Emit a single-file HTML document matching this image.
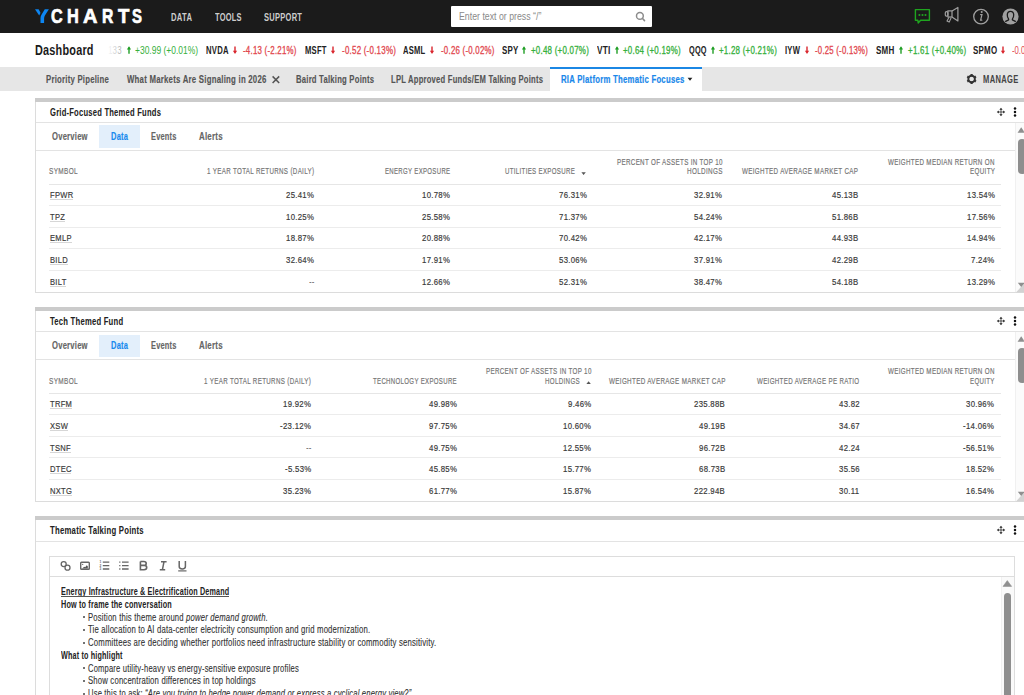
<!DOCTYPE html><html><head><meta charset="utf-8"><style>
html,body{margin:0;padding:0;width:1024px;height:695px;overflow:hidden;background:#fff;}
body{position:relative;font-family:"Liberation Sans",sans-serif;}
.t{position:absolute;white-space:nowrap;transform-origin:0 0;}
.r{position:absolute;}
</style></head><body>
<div class="r" style="left:0.00px;top:0.00px;width:1024.00px;height:33.20px;background:#1b1b1b;"></div>
<svg class="r" style="left:0;top:0" width="160" height="33" viewBox="0 0 160 33">
<path d="M35.0 9.2 H38.6 L40.3 12.2 Q40.5 13.0 40.1 13.8 L39.2 15.4 Z" fill="#0d86f2"/>
<path d="M44.8 9.2 H48.9 L44.9 15.6 Q44.1 16.9 44.1 18.6 V22.9 H40.5 V18.2 Q40.5 16.2 41.6 14.4 Z" fill="#0d86f2"/>
</svg>
<div class="t" style="top:7px;left:51.05px;font-size:19.77px;line-height:19.77px;color:#ffffff;font-weight:bold;transform:scaleX(0.8184);-webkit-text-stroke:0.7px #fff;">C</div>
<div class="t" style="top:7px;left:67.40px;font-size:19.77px;line-height:19.77px;color:#ffffff;font-weight:bold;transform:scaleX(0.8290);-webkit-text-stroke:0.7px #fff;">H</div>
<div class="t" style="top:7px;left:83.40px;font-size:19.77px;line-height:19.77px;color:#ffffff;font-weight:bold;transform:scaleX(1.0116);-webkit-text-stroke:0.7px #fff;">A</div>
<div class="t" style="top:7px;left:102.20px;font-size:19.77px;line-height:19.77px;color:#ffffff;font-weight:bold;transform:scaleX(0.7939);-webkit-text-stroke:0.7px #fff;">R</div>
<div class="t" style="top:7px;left:117.55px;font-size:19.77px;line-height:19.77px;color:#ffffff;font-weight:bold;transform:scaleX(0.9412);-webkit-text-stroke:0.7px #fff;">T</div>
<div class="t" style="top:7px;left:132.30px;font-size:19.77px;line-height:19.77px;color:#ffffff;font-weight:bold;transform:scaleX(0.7530);-webkit-text-stroke:0.7px #fff;">S</div>
<div class="t" style="top:12px;left:171.00px;font-size:10.90px;line-height:10.90px;color:#cdcdcd;font-weight:bold;letter-spacing:0.40px;transform:scaleX(0.7031);">DATA</div>
<div class="t" style="top:12px;left:214.70px;font-size:10.90px;line-height:10.90px;color:#cdcdcd;font-weight:bold;letter-spacing:0.40px;transform:scaleX(0.6832);">TOOLS</div>
<div class="t" style="top:12px;left:264.00px;font-size:10.90px;line-height:10.90px;color:#cdcdcd;font-weight:bold;letter-spacing:0.40px;transform:scaleX(0.6896);">SUPPORT</div>
<div class="r" style="left:451.10px;top:6.10px;width:201.00px;height:20.80px;background:#ffffff;border-radius:1px;"></div>
<div class="t" style="top:12px;left:459.10px;font-size:10.47px;line-height:10.47px;color:#8a8a8a;transform:scaleX(0.8372);">Enter text or press &ldquo;/&rdquo;</div>
<svg class="r" style="left:634px;top:10px" width="14" height="14" viewBox="0 0 14 14">
<circle cx="5.9" cy="5.9" r="3.4" stroke="#8c8c8c" stroke-width="1.5" fill="none"/><path d="M8.3 8.3 L10.5 10.6" stroke="#8c8c8c" stroke-width="1.6" stroke-linecap="round"/></svg>
<svg class="r" style="left:900px;top:0" width="124" height="33" viewBox="900 0 124 33">
<path d="M915.4 9.6 H929.4 V20.2 H920.6 L918.2 23.0 L917.8 20.2 H915.4 Z" stroke="#1fa51f" stroke-width="1.4" fill="none" stroke-linejoin="round"/>
<circle cx="919.4" cy="15.0" r="1.05" fill="#1fa51f"/><circle cx="922.5" cy="15.0" r="1.05" fill="#1fa51f"/><circle cx="925.5" cy="15.0" r="1.05" fill="#1fa51f"/>
<rect x="945.3" y="11.7" width="2.6" height="4.5" rx="1.2" stroke="#a0a0a0" stroke-width="1.2" fill="none"/>
<rect x="947.9" y="10.9" width="4.1" height="6.1" stroke="#a0a0a0" stroke-width="1.2" fill="none"/>
<path d="M952 10.9 L957.9 7.5 V21.0 L952 17.0" stroke="#a0a0a0" stroke-width="1.2" fill="none" stroke-linejoin="round"/>
<path d="M949.0 17.3 L947.0 20.9 L949.2 22.1 L951.2 17.6" stroke="#a0a0a0" stroke-width="1.1" fill="none" stroke-linejoin="round"/>
<circle cx="981.0" cy="16.6" r="7.3" stroke="#a0a0a0" stroke-width="1.3" fill="none"/>
<path d="M981.6 12.0 h0.2" stroke="#a0a0a0" stroke-width="1.8" stroke-linecap="round"/>
<path d="M980.6 14.6 h1.4 l-1.4 5.6 h1.2" stroke="#a0a0a0" stroke-width="1.2" fill="none" stroke-linecap="round"/>
<circle cx="1010.5" cy="16.5" r="8.1" fill="#a0a0a0"/>
<path d="M1005.2 21.6 L1008.6 19.9 Q1008.8 19.2 1008.4 18.6 Q1007.2 17.0 1007.3 14.6 Q1007.5 11.3 1010.5 11.3 Q1013.5 11.3 1013.7 14.6 Q1013.8 17.0 1012.6 18.6 Q1012.2 19.2 1012.4 19.9 L1015.8 21.6" stroke="#1b1b1b" stroke-width="1.3" fill="none" stroke-linejoin="round"/>
</svg>
<div class="t" style="top:43px;left:35.00px;font-size:14.97px;line-height:14.97px;color:#1a1a1a;font-weight:bold;letter-spacing:0.30px;transform:scaleX(0.7256);">Dashboard</div>
<div class="t" style="top:46px;left:108.20px;font-size:10.17px;line-height:10.17px;color:#777;letter-spacing:0.30px;transform:scaleX(0.7734);">133</div>
<div class="r" style="left:104.00px;top:40.00px;width:21.00px;height:18.00px;background:linear-gradient(to right,rgba(255,255,255,1) 15%,rgba(255,255,255,0.3) 100%);"></div>
<svg class="r" style="left:124.75px;top:44px" width="8" height="12" viewBox="0 0 8 12"><path d="M4 3.6 V9.8" stroke="#1f9e25" stroke-width="1.4"/><path d="M1.9 5.4 L4 2.3 L6.1 5.4 Z" fill="#1f9e25"/></svg>
<div class="t" style="top:46px;left:135.20px;font-size:10.17px;line-height:10.17px;color:#36b03c;transform:scaleX(0.8341);">+30.99 (+0.01%)</div>
<div class="t" style="top:46px;left:205.90px;font-size:10.17px;line-height:10.17px;color:#222222;font-weight:bold;letter-spacing:0.30px;transform:scaleX(0.7568);">NVDA</div>
<svg class="r" style="left:230.75px;top:44px" width="8" height="12" viewBox="0 0 8 12"><path d="M4 2.4 V8.6" stroke="#d9262e" stroke-width="1.4"/><path d="M1.9 6.8 L4 9.9 L6.1 6.8 Z" fill="#d9262e"/></svg>
<div class="t" style="top:46px;left:243.40px;font-size:10.17px;line-height:10.17px;color:#e2474e;letter-spacing:0.30px;transform:scaleX(0.7766);-webkit-text-stroke:0.3px currentColor;">-4.13 (-2.21%)</div>
<div class="t" style="top:46px;left:304.60px;font-size:10.17px;line-height:10.17px;color:#222222;font-weight:bold;letter-spacing:0.30px;transform:scaleX(0.7527);">MSFT</div>
<svg class="r" style="left:328.65px;top:44px" width="8" height="12" viewBox="0 0 8 12"><path d="M4 2.4 V8.6" stroke="#d9262e" stroke-width="1.4"/><path d="M1.9 6.8 L4 9.9 L6.1 6.8 Z" fill="#d9262e"/></svg>
<div class="t" style="top:46px;left:342.00px;font-size:10.17px;line-height:10.17px;color:#e2474e;letter-spacing:0.30px;transform:scaleX(0.7824);-webkit-text-stroke:0.3px currentColor;">-0.52 (-0.13%)</div>
<div class="t" style="top:46px;left:403.30px;font-size:10.17px;line-height:10.17px;color:#222222;font-weight:bold;letter-spacing:0.30px;transform:scaleX(0.7467);">ASML</div>
<svg class="r" style="left:428.05px;top:44px" width="8" height="12" viewBox="0 0 8 12"><path d="M4 2.4 V8.6" stroke="#d9262e" stroke-width="1.4"/><path d="M1.9 6.8 L4 9.9 L6.1 6.8 Z" fill="#d9262e"/></svg>
<div class="t" style="top:46px;left:441.30px;font-size:10.17px;line-height:10.17px;color:#e2474e;letter-spacing:0.30px;transform:scaleX(0.7752);-webkit-text-stroke:0.3px currentColor;">-0.26 (-0.02%)</div>
<div class="t" style="top:46px;left:501.60px;font-size:10.17px;line-height:10.17px;color:#222222;font-weight:bold;letter-spacing:0.30px;transform:scaleX(0.7784);">SPY</div>
<svg class="r" style="left:520.05px;top:44px" width="8" height="12" viewBox="0 0 8 12"><path d="M4 3.6 V9.8" stroke="#1f9e25" stroke-width="1.4"/><path d="M1.9 5.4 L4 2.3 L6.1 5.4 Z" fill="#1f9e25"/></svg>
<div class="t" style="top:46px;left:531.30px;font-size:10.17px;line-height:10.17px;color:#36b03c;letter-spacing:0.30px;transform:scaleX(0.7822);-webkit-text-stroke:0.3px currentColor;">+0.48 (+0.07%)</div>
<div class="t" style="top:46px;left:596.60px;font-size:10.17px;line-height:10.17px;color:#222222;font-weight:bold;letter-spacing:0.30px;transform:scaleX(0.8164);">VTI</div>
<svg class="r" style="left:612.65px;top:44px" width="8" height="12" viewBox="0 0 8 12"><path d="M4 3.6 V9.8" stroke="#1f9e25" stroke-width="1.4"/><path d="M1.9 5.4 L4 2.3 L6.1 5.4 Z" fill="#1f9e25"/></svg>
<div class="t" style="top:46px;left:623.00px;font-size:10.17px;line-height:10.17px;color:#36b03c;letter-spacing:0.30px;transform:scaleX(0.7795);-webkit-text-stroke:0.3px currentColor;">+0.64 (+0.19%)</div>
<div class="t" style="top:46px;left:688.70px;font-size:10.17px;line-height:10.17px;color:#222222;font-weight:bold;letter-spacing:0.30px;transform:scaleX(0.7229);">QQQ</div>
<svg class="r" style="left:708.85px;top:44px" width="8" height="12" viewBox="0 0 8 12"><path d="M4 3.6 V9.8" stroke="#1f9e25" stroke-width="1.4"/><path d="M1.9 5.4 L4 2.3 L6.1 5.4 Z" fill="#1f9e25"/></svg>
<div class="t" style="top:46px;left:719.30px;font-size:10.17px;line-height:10.17px;color:#36b03c;letter-spacing:0.30px;transform:scaleX(0.7822);-webkit-text-stroke:0.3px currentColor;">+1.28 (+0.21%)</div>
<div class="t" style="top:46px;left:784.80px;font-size:10.17px;line-height:10.17px;color:#222222;font-weight:bold;letter-spacing:0.30px;transform:scaleX(0.7517);">IYW</div>
<svg class="r" style="left:802.55px;top:44px" width="8" height="12" viewBox="0 0 8 12"><path d="M4 2.4 V8.6" stroke="#d9262e" stroke-width="1.4"/><path d="M1.9 6.8 L4 9.9 L6.1 6.8 Z" fill="#d9262e"/></svg>
<div class="t" style="top:46px;left:814.90px;font-size:10.17px;line-height:10.17px;color:#e2474e;letter-spacing:0.30px;transform:scaleX(0.7665);-webkit-text-stroke:0.3px currentColor;">-0.25 (-0.13%)</div>
<div class="t" style="top:46px;left:875.90px;font-size:10.17px;line-height:10.17px;color:#222222;font-weight:bold;letter-spacing:0.30px;transform:scaleX(0.7896);">SMH</div>
<svg class="r" style="left:896.95px;top:44px" width="8" height="12" viewBox="0 0 8 12"><path d="M4 3.6 V9.8" stroke="#1f9e25" stroke-width="1.4"/><path d="M1.9 5.4 L4 2.3 L6.1 5.4 Z" fill="#1f9e25"/></svg>
<div class="t" style="top:46px;left:907.70px;font-size:10.17px;line-height:10.17px;color:#36b03c;letter-spacing:0.30px;transform:scaleX(0.7863);-webkit-text-stroke:0.3px currentColor;">+1.61 (+0.40%)</div>
<div class="t" style="top:46px;left:972.90px;font-size:10.17px;line-height:10.17px;color:#222222;font-weight:bold;letter-spacing:0.30px;transform:scaleX(0.7812);">SPMO</div>
<svg class="r" style="left:999.40px;top:44px" width="8" height="12" viewBox="0 0 8 12"><path d="M4 2.4 V8.6" stroke="#d9262e" stroke-width="1.4"/><path d="M1.9 6.8 L4 9.9 L6.1 6.8 Z" fill="#d9262e"/></svg>
<div class="t" style="top:46px;left:1011.70px;font-size:10.17px;line-height:10.17px;color:#e2474e;transform:scaleX(0.7600);">-0.02 (-0.01%)</div>
<div class="r" style="left:0.00px;top:66.80px;width:1024.00px;height:23.90px;background:#e6e6e6;"></div>
<div class="t" style="top:73px;left:46.20px;font-size:11.63px;line-height:11.63px;color:#555555;font-weight:bold;letter-spacing:0.35px;transform:scaleX(0.6669);-webkit-text-stroke:0.15px currentColor;">Priority Pipeline</div>
<div class="t" style="top:73px;left:126.60px;font-size:11.63px;line-height:11.63px;color:#555555;font-weight:bold;letter-spacing:0.35px;transform:scaleX(0.6716);-webkit-text-stroke:0.15px currentColor;">What Markets Are Signaling in 2026</div>
<svg class="r" style="left:270px;top:73px" width="12" height="12" viewBox="270 73 12 12"><path d="M272.6 76.4 L279.2 83.0 M279.2 76.4 L272.6 83.0" stroke="#555" stroke-width="1.5"/></svg>
<div class="t" style="top:73px;left:296.00px;font-size:11.63px;line-height:11.63px;color:#555555;font-weight:bold;letter-spacing:0.35px;transform:scaleX(0.6597);-webkit-text-stroke:0.15px currentColor;">Baird Talking Points</div>
<div class="t" style="top:73px;left:391.00px;font-size:11.63px;line-height:11.63px;color:#555555;font-weight:bold;letter-spacing:0.35px;transform:scaleX(0.6560);-webkit-text-stroke:0.15px currentColor;">LPL Approved Funds/EM Talking Points</div>
<div class="r" style="left:549.50px;top:66.80px;width:152.70px;height:25.00px;background:#ffffff;"></div>
<div class="r" style="left:549.50px;top:66.80px;width:152.70px;height:2.10px;background:#1b87e4;"></div>
<div class="t" style="top:74px;left:560.60px;font-size:10.76px;line-height:10.76px;color:#1a88ea;font-weight:bold;letter-spacing:0.35px;transform:scaleX(0.7199);-webkit-text-stroke:0.2px currentColor;">RIA Platform Thematic Focuses</div>
<svg class="r" style="left:686px;top:76px" width="8" height="6" viewBox="0 0 8 6"><path d="M1.6 1.8 H6.4 L4.0 4.8 Z" fill="#222"/></svg>
<svg class="r" style="left:965px;top:72px" width="14" height="14" viewBox="0 0 14 14">
<g transform="translate(6.6 7.0)">
<circle r="3.3" stroke="#333" stroke-width="1.9" fill="none"/>
<g fill="#333">
<rect x="-1.1" y="-5.0" width="2.2" height="2.4"/>
<rect x="-1.1" y="-5.0" width="2.2" height="2.4" transform="rotate(60)"/>
<rect x="-1.1" y="-5.0" width="2.2" height="2.4" transform="rotate(120)"/>
<rect x="-1.1" y="-5.0" width="2.2" height="2.4" transform="rotate(180)"/>
<rect x="-1.1" y="-5.0" width="2.2" height="2.4" transform="rotate(240)"/>
<rect x="-1.1" y="-5.0" width="2.2" height="2.4" transform="rotate(300)"/>
</g></g></svg>
<div class="t" style="top:75px;left:982.60px;font-size:10.47px;line-height:10.47px;color:#444;font-weight:bold;letter-spacing:0.50px;transform:scaleX(0.7219);">MANAGE</div>
<div class="r" style="left:35.00px;top:97.90px;width:989.00px;height:3.70px;background:#cbcbcb;"></div>
<div class="r" style="left:35.00px;top:101.60px;width:1.00px;height:190.70px;background:#dcdcdc;"></div>
<div class="t" style="top:108px;left:49.80px;font-size:10.03px;line-height:10.03px;color:#222;font-weight:bold;letter-spacing:0.30px;transform:scaleX(0.7576);-webkit-text-stroke:0.05px currentColor;">Grid-Focused Themed Funds</div>
<svg class="r" style="left:994.60px;top:106.10px" width="12" height="12" viewBox="0 0 12 12">
<path d="M6 3 V9 M3 6 H9" stroke="#333" stroke-width="0.8"/>
<path d="M6 1.8 L4.4 3.8 H7.6 Z M6 10.2 L4.4 8.2 H7.6 Z M1.8 6 L3.8 4.4 V7.6 Z M10.2 6 L8.2 4.4 V7.6 Z" fill="#222"/></svg>
<svg class="r" style="left:1011.60px;top:106.00px" width="6" height="12" viewBox="0 0 6 12">
<circle cx="3" cy="2.6" r="1.25" fill="#111"/><circle cx="3" cy="6" r="1.25" fill="#111"/><circle cx="3" cy="9.4" r="1.25" fill="#111"/></svg>
<div class="r" style="left:36.00px;top:122.20px;width:988.00px;height:1.00px;background:#e3e3e3;"></div>
<div class="r" style="left:35.00px;top:292.30px;width:989.00px;height:1.00px;background:#dcdcdc;"></div>
<div class="r" style="left:99.20px;top:125.40px;width:40.40px;height:22.20px;background:#e3effb;"></div>
<div class="t" style="top:132px;left:52.40px;font-size:10.32px;line-height:10.32px;color:#666;font-weight:bold;letter-spacing:0.30px;transform:scaleX(0.7413);-webkit-text-stroke:0.15px currentColor;">Overview</div>
<div class="t" style="top:132px;left:110.90px;font-size:10.32px;line-height:10.32px;color:#1a8aee;font-weight:bold;letter-spacing:0.30px;transform:scaleX(0.7282);-webkit-text-stroke:0.15px currentColor;">Data</div>
<div class="t" style="top:132px;left:150.75px;font-size:10.32px;line-height:10.32px;color:#666;font-weight:bold;letter-spacing:0.30px;transform:scaleX(0.7200);-webkit-text-stroke:0.15px currentColor;">Events</div>
<div class="t" style="top:132px;left:199.00px;font-size:10.32px;line-height:10.32px;color:#666;font-weight:bold;letter-spacing:0.30px;transform:scaleX(0.7673);-webkit-text-stroke:0.15px currentColor;">Alerts</div>
<div class="r" style="left:36.00px;top:150.00px;width:979.00px;height:1.00px;background:#e3e3e3;"></div>
<div class="r" style="left:1015.30px;top:123.20px;width:8.70px;height:169.10px;background:#fbfbfb;"></div>
<div class="r" style="left:1015.30px;top:123.20px;width:0.80px;height:169.10px;background:#f0f0f0;"></div>
<svg class="r" style="left:1016px;top:125.90px" width="8" height="8" viewBox="0 0 8 8"><path d="M1.6 6.8 L5.2 1.2 L8.8 6.8 Z" fill="#8f8f8f"/></svg>
<div class="r" style="left:1018.20px;top:138.70px;width:8.00px;height:35.10px;background:#8e8e8e;border-radius:4px;"></div>
<svg class="r" style="left:1014px;top:281.90px" width="10" height="11" viewBox="0 0 10 11"><path d="M2 10.4 L10 10.4 L10 1.6 Z" fill="#d2d2d2"/><path d="M3.8 0.8 L7.2 5.0 L10.6 0.8 Z" fill="#8f8f8f"/></svg>
<div class="t" style="top:167px;left:49.20px;font-size:9.30px;line-height:9.30px;color:#767676;letter-spacing:0.50px;transform:scaleX(0.6928);-webkit-text-stroke:0.2px currentColor;">SYMBOL</div>
<div class="t" style="top:167px;left:207.20px;font-size:9.30px;line-height:9.30px;color:#767676;letter-spacing:0.50px;transform:scaleX(0.6689);-webkit-text-stroke:0.2px currentColor;">1 YEAR TOTAL RETURNS (DAILY)</div>
<div class="t" style="top:167px;left:385.20px;font-size:9.30px;line-height:9.30px;color:#767676;letter-spacing:0.50px;transform:scaleX(0.6486);-webkit-text-stroke:0.2px currentColor;">ENERGY EXPOSURE</div>
<div class="t" style="top:167px;left:505.10px;font-size:9.30px;line-height:9.30px;color:#767676;letter-spacing:0.50px;transform:scaleX(0.6582);-webkit-text-stroke:0.2px currentColor;">UTILITIES EXPOSURE</div>
<div class="t" style="top:158px;left:616.50px;font-size:9.30px;line-height:9.30px;color:#767676;letter-spacing:0.50px;transform:scaleX(0.6696);-webkit-text-stroke:0.2px currentColor;">PERCENT OF ASSETS IN TOP 10</div>
<div class="t" style="top:167px;left:686.50px;font-size:9.30px;line-height:9.30px;color:#767676;letter-spacing:0.50px;transform:scaleX(0.6815);-webkit-text-stroke:0.2px currentColor;">HOLDINGS</div>
<div class="t" style="top:167px;left:742.00px;font-size:9.30px;line-height:9.30px;color:#767676;letter-spacing:0.50px;transform:scaleX(0.6730);-webkit-text-stroke:0.2px currentColor;">WEIGHTED AVERAGE MARKET CAP</div>
<div class="t" style="top:158px;left:888.00px;font-size:9.30px;line-height:9.30px;color:#767676;letter-spacing:0.50px;transform:scaleX(0.6708);-webkit-text-stroke:0.2px currentColor;">WEIGHTED MEDIAN RETURN ON</div>
<div class="t" style="top:167px;left:969.50px;font-size:9.30px;line-height:9.30px;color:#767676;letter-spacing:0.50px;transform:scaleX(0.6731);-webkit-text-stroke:0.2px currentColor;">EQUITY</div>
<div class="r" style="left:49.40px;top:183.60px;width:951.60px;height:1.00px;background:#e6e6e6;"></div>
<div class="t" style="top:190px;left:49.50px;font-size:9.96px;line-height:9.96px;color:#3a3a3a;letter-spacing:0.40px;transform:scaleX(0.7600);-webkit-text-stroke:0.2px currentColor;">FPWR</div>
<div class="r" style="left:49.50px;top:199.10px;width:23.70px;height:0.80px;background:#d6d6d6;"></div>
<div class="t" style="top:190px;left:286.40px;font-size:9.96px;line-height:9.96px;color:#3a3a3a;letter-spacing:0.40px;transform:scaleX(0.7800);-webkit-text-stroke:0.2px currentColor;">25.41%</div>
<div class="t" style="top:190px;left:422.40px;font-size:9.96px;line-height:9.96px;color:#3a3a3a;letter-spacing:0.40px;transform:scaleX(0.7800);-webkit-text-stroke:0.2px currentColor;">10.78%</div>
<div class="t" style="top:190px;left:558.50px;font-size:9.96px;line-height:9.96px;color:#3a3a3a;letter-spacing:0.40px;transform:scaleX(0.7800);-webkit-text-stroke:0.2px currentColor;">76.31%</div>
<div class="t" style="top:190px;left:694.10px;font-size:9.96px;line-height:9.96px;color:#3a3a3a;letter-spacing:0.40px;transform:scaleX(0.7800);-webkit-text-stroke:0.2px currentColor;">32.91%</div>
<div class="t" style="top:190px;left:831.81px;font-size:9.96px;line-height:9.96px;color:#3a3a3a;letter-spacing:0.40px;transform:scaleX(0.7800);-webkit-text-stroke:0.2px currentColor;">45.13B</div>
<div class="t" style="top:190px;left:966.60px;font-size:9.96px;line-height:9.96px;color:#3a3a3a;letter-spacing:0.40px;transform:scaleX(0.7800);-webkit-text-stroke:0.2px currentColor;">13.54%</div>
<div class="r" style="left:49.40px;top:205.00px;width:951.60px;height:1.00px;background:#ececec;"></div>
<div class="t" style="top:212px;left:49.50px;font-size:9.96px;line-height:9.96px;color:#3a3a3a;letter-spacing:0.40px;transform:scaleX(0.7600);-webkit-text-stroke:0.2px currentColor;">TPZ</div>
<div class="r" style="left:49.50px;top:220.70px;width:15.41px;height:0.80px;background:#d6d6d6;"></div>
<div class="t" style="top:212px;left:286.40px;font-size:9.96px;line-height:9.96px;color:#3a3a3a;letter-spacing:0.40px;transform:scaleX(0.7800);-webkit-text-stroke:0.2px currentColor;">10.25%</div>
<div class="t" style="top:212px;left:422.40px;font-size:9.96px;line-height:9.96px;color:#3a3a3a;letter-spacing:0.40px;transform:scaleX(0.7800);-webkit-text-stroke:0.2px currentColor;">25.58%</div>
<div class="t" style="top:212px;left:558.50px;font-size:9.96px;line-height:9.96px;color:#3a3a3a;letter-spacing:0.40px;transform:scaleX(0.7800);-webkit-text-stroke:0.2px currentColor;">71.37%</div>
<div class="t" style="top:212px;left:694.10px;font-size:9.96px;line-height:9.96px;color:#3a3a3a;letter-spacing:0.40px;transform:scaleX(0.7800);-webkit-text-stroke:0.2px currentColor;">54.24%</div>
<div class="t" style="top:212px;left:831.81px;font-size:9.96px;line-height:9.96px;color:#3a3a3a;letter-spacing:0.40px;transform:scaleX(0.7800);-webkit-text-stroke:0.2px currentColor;">51.86B</div>
<div class="t" style="top:212px;left:966.60px;font-size:9.96px;line-height:9.96px;color:#3a3a3a;letter-spacing:0.40px;transform:scaleX(0.7800);-webkit-text-stroke:0.2px currentColor;">17.56%</div>
<div class="r" style="left:49.40px;top:226.60px;width:951.60px;height:1.00px;background:#ececec;"></div>
<div class="t" style="top:233px;left:49.50px;font-size:9.96px;line-height:9.96px;color:#3a3a3a;letter-spacing:0.40px;transform:scaleX(0.7600);-webkit-text-stroke:0.2px currentColor;">EMLP</div>
<div class="r" style="left:49.50px;top:242.30px;width:22.03px;height:0.80px;background:#d6d6d6;"></div>
<div class="t" style="top:233px;left:286.40px;font-size:9.96px;line-height:9.96px;color:#3a3a3a;letter-spacing:0.40px;transform:scaleX(0.7800);-webkit-text-stroke:0.2px currentColor;">18.87%</div>
<div class="t" style="top:233px;left:422.40px;font-size:9.96px;line-height:9.96px;color:#3a3a3a;letter-spacing:0.40px;transform:scaleX(0.7800);-webkit-text-stroke:0.2px currentColor;">20.88%</div>
<div class="t" style="top:233px;left:558.50px;font-size:9.96px;line-height:9.96px;color:#3a3a3a;letter-spacing:0.40px;transform:scaleX(0.7800);-webkit-text-stroke:0.2px currentColor;">70.42%</div>
<div class="t" style="top:233px;left:694.10px;font-size:9.96px;line-height:9.96px;color:#3a3a3a;letter-spacing:0.40px;transform:scaleX(0.7800);-webkit-text-stroke:0.2px currentColor;">42.17%</div>
<div class="t" style="top:233px;left:831.81px;font-size:9.96px;line-height:9.96px;color:#3a3a3a;letter-spacing:0.40px;transform:scaleX(0.7800);-webkit-text-stroke:0.2px currentColor;">44.93B</div>
<div class="t" style="top:233px;left:966.60px;font-size:9.96px;line-height:9.96px;color:#3a3a3a;letter-spacing:0.40px;transform:scaleX(0.7800);-webkit-text-stroke:0.2px currentColor;">14.94%</div>
<div class="r" style="left:49.40px;top:248.20px;width:951.60px;height:1.00px;background:#ececec;"></div>
<div class="t" style="top:255px;left:49.50px;font-size:9.96px;line-height:9.96px;color:#3a3a3a;letter-spacing:0.40px;transform:scaleX(0.7600);-webkit-text-stroke:0.2px currentColor;">BILD</div>
<div class="r" style="left:49.50px;top:263.90px;width:18.25px;height:0.80px;background:#d6d6d6;"></div>
<div class="t" style="top:255px;left:286.40px;font-size:9.96px;line-height:9.96px;color:#3a3a3a;letter-spacing:0.40px;transform:scaleX(0.7800);-webkit-text-stroke:0.2px currentColor;">32.64%</div>
<div class="t" style="top:255px;left:422.40px;font-size:9.96px;line-height:9.96px;color:#3a3a3a;letter-spacing:0.40px;transform:scaleX(0.7800);-webkit-text-stroke:0.2px currentColor;">17.91%</div>
<div class="t" style="top:255px;left:558.50px;font-size:9.96px;line-height:9.96px;color:#3a3a3a;letter-spacing:0.40px;transform:scaleX(0.7800);-webkit-text-stroke:0.2px currentColor;">53.06%</div>
<div class="t" style="top:255px;left:694.10px;font-size:9.96px;line-height:9.96px;color:#3a3a3a;letter-spacing:0.40px;transform:scaleX(0.7800);-webkit-text-stroke:0.2px currentColor;">37.91%</div>
<div class="t" style="top:255px;left:831.81px;font-size:9.96px;line-height:9.96px;color:#3a3a3a;letter-spacing:0.40px;transform:scaleX(0.7800);-webkit-text-stroke:0.2px currentColor;">42.29B</div>
<div class="t" style="top:255px;left:971.23px;font-size:9.96px;line-height:9.96px;color:#3a3a3a;letter-spacing:0.40px;transform:scaleX(0.7800);-webkit-text-stroke:0.2px currentColor;">7.24%</div>
<div class="r" style="left:49.40px;top:269.80px;width:951.60px;height:1.00px;background:#ececec;"></div>
<div class="t" style="top:277px;left:49.50px;font-size:9.96px;line-height:9.96px;color:#3a3a3a;letter-spacing:0.40px;transform:scaleX(0.7600);-webkit-text-stroke:0.2px currentColor;">BILT</div>
<div class="r" style="left:49.50px;top:285.50px;width:16.85px;height:0.80px;background:#d6d6d6;"></div>
<div class="t" style="top:277px;left:309.00px;font-size:9.96px;line-height:9.96px;color:#555;transform:scaleX(0.8000);">--</div>
<div class="t" style="top:277px;left:422.40px;font-size:9.96px;line-height:9.96px;color:#3a3a3a;letter-spacing:0.40px;transform:scaleX(0.7800);-webkit-text-stroke:0.2px currentColor;">12.66%</div>
<div class="t" style="top:277px;left:558.50px;font-size:9.96px;line-height:9.96px;color:#3a3a3a;letter-spacing:0.40px;transform:scaleX(0.7800);-webkit-text-stroke:0.2px currentColor;">52.31%</div>
<div class="t" style="top:277px;left:694.10px;font-size:9.96px;line-height:9.96px;color:#3a3a3a;letter-spacing:0.40px;transform:scaleX(0.7800);-webkit-text-stroke:0.2px currentColor;">38.47%</div>
<div class="t" style="top:277px;left:831.81px;font-size:9.96px;line-height:9.96px;color:#3a3a3a;letter-spacing:0.40px;transform:scaleX(0.7800);-webkit-text-stroke:0.2px currentColor;">54.18B</div>
<div class="t" style="top:277px;left:966.60px;font-size:9.96px;line-height:9.96px;color:#3a3a3a;letter-spacing:0.40px;transform:scaleX(0.7800);-webkit-text-stroke:0.2px currentColor;">13.29%</div>
<svg class="r" style="left:580px;top:171.40px" width="8" height="6" viewBox="0 0 8 6"><path d="M1.4 1.2 H5.8 L3.6 4.0 Z" fill="#555"/></svg>
<div class="r" style="left:35.00px;top:307.10px;width:989.00px;height:3.70px;background:#cbcbcb;"></div>
<div class="r" style="left:35.00px;top:310.80px;width:1.00px;height:190.40px;background:#dcdcdc;"></div>
<div class="t" style="top:317px;left:49.80px;font-size:10.03px;line-height:10.03px;color:#222;font-weight:bold;letter-spacing:0.30px;transform:scaleX(0.7647);-webkit-text-stroke:0.05px currentColor;">Tech Themed Fund</div>
<svg class="r" style="left:994.60px;top:315.30px" width="12" height="12" viewBox="0 0 12 12">
<path d="M6 3 V9 M3 6 H9" stroke="#333" stroke-width="0.8"/>
<path d="M6 1.8 L4.4 3.8 H7.6 Z M6 10.2 L4.4 8.2 H7.6 Z M1.8 6 L3.8 4.4 V7.6 Z M10.2 6 L8.2 4.4 V7.6 Z" fill="#222"/></svg>
<svg class="r" style="left:1011.60px;top:315.20px" width="6" height="12" viewBox="0 0 6 12">
<circle cx="3" cy="2.6" r="1.25" fill="#111"/><circle cx="3" cy="6" r="1.25" fill="#111"/><circle cx="3" cy="9.4" r="1.25" fill="#111"/></svg>
<div class="r" style="left:36.00px;top:331.40px;width:988.00px;height:1.00px;background:#e3e3e3;"></div>
<div class="r" style="left:35.00px;top:501.20px;width:989.00px;height:1.00px;background:#dcdcdc;"></div>
<div class="r" style="left:99.20px;top:334.60px;width:40.40px;height:22.20px;background:#e3effb;"></div>
<div class="t" style="top:341px;left:52.40px;font-size:10.32px;line-height:10.32px;color:#666;font-weight:bold;letter-spacing:0.30px;transform:scaleX(0.7413);-webkit-text-stroke:0.15px currentColor;">Overview</div>
<div class="t" style="top:341px;left:110.90px;font-size:10.32px;line-height:10.32px;color:#1a8aee;font-weight:bold;letter-spacing:0.30px;transform:scaleX(0.7282);-webkit-text-stroke:0.15px currentColor;">Data</div>
<div class="t" style="top:341px;left:150.75px;font-size:10.32px;line-height:10.32px;color:#666;font-weight:bold;letter-spacing:0.30px;transform:scaleX(0.7200);-webkit-text-stroke:0.15px currentColor;">Events</div>
<div class="t" style="top:341px;left:199.00px;font-size:10.32px;line-height:10.32px;color:#666;font-weight:bold;letter-spacing:0.30px;transform:scaleX(0.7673);-webkit-text-stroke:0.15px currentColor;">Alerts</div>
<div class="r" style="left:36.00px;top:359.20px;width:979.00px;height:1.00px;background:#e3e3e3;"></div>
<div class="r" style="left:1015.30px;top:332.40px;width:8.70px;height:169.10px;background:#fbfbfb;"></div>
<div class="r" style="left:1015.30px;top:332.40px;width:0.80px;height:169.10px;background:#f0f0f0;"></div>
<svg class="r" style="left:1016px;top:335.10px" width="8" height="8" viewBox="0 0 8 8"><path d="M1.6 6.8 L5.2 1.2 L8.8 6.8 Z" fill="#8f8f8f"/></svg>
<div class="r" style="left:1018.20px;top:347.90px;width:8.00px;height:35.10px;background:#8e8e8e;border-radius:4px;"></div>
<svg class="r" style="left:1014px;top:491.10px" width="10" height="11" viewBox="0 0 10 11"><path d="M2 10.4 L10 10.4 L10 1.6 Z" fill="#d2d2d2"/><path d="M3.8 0.8 L7.2 5.0 L10.6 0.8 Z" fill="#8f8f8f"/></svg>
<div class="t" style="top:377px;left:49.20px;font-size:9.30px;line-height:9.30px;color:#767676;letter-spacing:0.50px;transform:scaleX(0.6928);-webkit-text-stroke:0.2px currentColor;">SYMBOL</div>
<div class="t" style="top:377px;left:204.10px;font-size:9.30px;line-height:9.30px;color:#767676;letter-spacing:0.50px;transform:scaleX(0.6676);-webkit-text-stroke:0.2px currentColor;">1 YEAR TOTAL RETURNS (DAILY)</div>
<div class="t" style="top:377px;left:372.70px;font-size:9.30px;line-height:9.30px;color:#767676;letter-spacing:0.50px;transform:scaleX(0.6528);-webkit-text-stroke:0.2px currentColor;">TECHNOLOGY EXPOSURE</div>
<div class="t" style="top:367px;left:485.60px;font-size:9.30px;line-height:9.30px;color:#767676;letter-spacing:0.50px;transform:scaleX(0.6689);-webkit-text-stroke:0.2px currentColor;">PERCENT OF ASSETS IN TOP 10</div>
<div class="t" style="top:377px;left:544.80px;font-size:9.30px;line-height:9.30px;color:#767676;letter-spacing:0.50px;transform:scaleX(0.6661);-webkit-text-stroke:0.2px currentColor;">HOLDINGS</div>
<div class="t" style="top:377px;left:608.80px;font-size:9.30px;line-height:9.30px;color:#767676;letter-spacing:0.50px;transform:scaleX(0.6759);-webkit-text-stroke:0.2px currentColor;">WEIGHTED AVERAGE MARKET CAP</div>
<div class="t" style="top:377px;left:757.20px;font-size:9.30px;line-height:9.30px;color:#767676;letter-spacing:0.50px;transform:scaleX(0.6646);-webkit-text-stroke:0.2px currentColor;">WEIGHTED AVERAGE PE RATIO</div>
<div class="t" style="top:367px;left:887.50px;font-size:9.30px;line-height:9.30px;color:#767676;letter-spacing:0.50px;transform:scaleX(0.6708);-webkit-text-stroke:0.2px currentColor;">WEIGHTED MEDIAN RETURN ON</div>
<div class="t" style="top:377px;left:969.60px;font-size:9.30px;line-height:9.30px;color:#767676;letter-spacing:0.50px;transform:scaleX(0.6569);-webkit-text-stroke:0.2px currentColor;">EQUITY</div>
<div class="r" style="left:49.40px;top:392.80px;width:951.60px;height:1.00px;background:#e6e6e6;"></div>
<div class="t" style="top:399px;left:49.50px;font-size:9.96px;line-height:9.96px;color:#3a3a3a;letter-spacing:0.40px;transform:scaleX(0.7600);-webkit-text-stroke:0.2px currentColor;">TRFM</div>
<div class="r" style="left:49.50px;top:408.30px;width:22.41px;height:0.80px;background:#d6d6d6;"></div>
<div class="t" style="top:399px;left:283.10px;font-size:9.96px;line-height:9.96px;color:#3a3a3a;letter-spacing:0.40px;transform:scaleX(0.7800);-webkit-text-stroke:0.2px currentColor;">19.92%</div>
<div class="t" style="top:399px;left:428.50px;font-size:9.96px;line-height:9.96px;color:#3a3a3a;letter-spacing:0.40px;transform:scaleX(0.7800);-webkit-text-stroke:0.2px currentColor;">49.98%</div>
<div class="t" style="top:399px;left:567.73px;font-size:9.96px;line-height:9.96px;color:#3a3a3a;letter-spacing:0.40px;transform:scaleX(0.7800);-webkit-text-stroke:0.2px currentColor;">9.46%</div>
<div class="t" style="top:399px;left:694.49px;font-size:9.96px;line-height:9.96px;color:#3a3a3a;letter-spacing:0.40px;transform:scaleX(0.7800);-webkit-text-stroke:0.2px currentColor;">235.88B</div>
<div class="t" style="top:399px;left:838.69px;font-size:9.96px;line-height:9.96px;color:#3a3a3a;letter-spacing:0.40px;transform:scaleX(0.7800);-webkit-text-stroke:0.2px currentColor;">43.82</div>
<div class="t" style="top:399px;left:966.10px;font-size:9.96px;line-height:9.96px;color:#3a3a3a;letter-spacing:0.40px;transform:scaleX(0.7800);-webkit-text-stroke:0.2px currentColor;">30.96%</div>
<div class="r" style="left:49.40px;top:414.20px;width:951.60px;height:1.00px;background:#ececec;"></div>
<div class="t" style="top:421px;left:49.50px;font-size:9.96px;line-height:9.96px;color:#3a3a3a;letter-spacing:0.40px;transform:scaleX(0.7600);-webkit-text-stroke:0.2px currentColor;">XSW</div>
<div class="r" style="left:49.50px;top:429.90px;width:18.36px;height:0.80px;background:#d6d6d6;"></div>
<div class="t" style="top:421px;left:280.19px;font-size:9.96px;line-height:9.96px;color:#3a3a3a;letter-spacing:0.40px;transform:scaleX(0.7800);-webkit-text-stroke:0.2px currentColor;">-23.12%</div>
<div class="t" style="top:421px;left:428.50px;font-size:9.96px;line-height:9.96px;color:#3a3a3a;letter-spacing:0.40px;transform:scaleX(0.7800);-webkit-text-stroke:0.2px currentColor;">97.75%</div>
<div class="t" style="top:421px;left:563.10px;font-size:9.96px;line-height:9.96px;color:#3a3a3a;letter-spacing:0.40px;transform:scaleX(0.7800);-webkit-text-stroke:0.2px currentColor;">10.60%</div>
<div class="t" style="top:421px;left:699.11px;font-size:9.96px;line-height:9.96px;color:#3a3a3a;letter-spacing:0.40px;transform:scaleX(0.7800);-webkit-text-stroke:0.2px currentColor;">49.19B</div>
<div class="t" style="top:421px;left:838.69px;font-size:9.96px;line-height:9.96px;color:#3a3a3a;letter-spacing:0.40px;transform:scaleX(0.7800);-webkit-text-stroke:0.2px currentColor;">34.67</div>
<div class="t" style="top:421px;left:963.19px;font-size:9.96px;line-height:9.96px;color:#3a3a3a;letter-spacing:0.40px;transform:scaleX(0.7800);-webkit-text-stroke:0.2px currentColor;">-14.06%</div>
<div class="r" style="left:49.40px;top:435.80px;width:951.60px;height:1.00px;background:#ececec;"></div>
<div class="t" style="top:443px;left:49.50px;font-size:9.96px;line-height:9.96px;color:#3a3a3a;letter-spacing:0.40px;transform:scaleX(0.7600);-webkit-text-stroke:0.2px currentColor;">TSNF</div>
<div class="r" style="left:49.50px;top:451.50px;width:21.16px;height:0.80px;background:#d6d6d6;"></div>
<div class="t" style="top:443px;left:305.70px;font-size:9.96px;line-height:9.96px;color:#555;transform:scaleX(0.8000);">--</div>
<div class="t" style="top:443px;left:428.50px;font-size:9.96px;line-height:9.96px;color:#3a3a3a;letter-spacing:0.40px;transform:scaleX(0.7800);-webkit-text-stroke:0.2px currentColor;">49.75%</div>
<div class="t" style="top:443px;left:563.10px;font-size:9.96px;line-height:9.96px;color:#3a3a3a;letter-spacing:0.40px;transform:scaleX(0.7800);-webkit-text-stroke:0.2px currentColor;">12.55%</div>
<div class="t" style="top:443px;left:699.11px;font-size:9.96px;line-height:9.96px;color:#3a3a3a;letter-spacing:0.40px;transform:scaleX(0.7800);-webkit-text-stroke:0.2px currentColor;">96.72B</div>
<div class="t" style="top:443px;left:838.69px;font-size:9.96px;line-height:9.96px;color:#3a3a3a;letter-spacing:0.40px;transform:scaleX(0.7800);-webkit-text-stroke:0.2px currentColor;">42.24</div>
<div class="t" style="top:443px;left:963.19px;font-size:9.96px;line-height:9.96px;color:#3a3a3a;letter-spacing:0.40px;transform:scaleX(0.7800);-webkit-text-stroke:0.2px currentColor;">-56.51%</div>
<div class="r" style="left:49.40px;top:457.40px;width:951.60px;height:1.00px;background:#ececec;"></div>
<div class="t" style="top:464px;left:49.50px;font-size:9.96px;line-height:9.96px;color:#3a3a3a;letter-spacing:0.40px;transform:scaleX(0.7600);-webkit-text-stroke:0.2px currentColor;">DTEC</div>
<div class="r" style="left:49.50px;top:473.10px;width:21.99px;height:0.80px;background:#d6d6d6;"></div>
<div class="t" style="top:464px;left:284.81px;font-size:9.96px;line-height:9.96px;color:#3a3a3a;letter-spacing:0.40px;transform:scaleX(0.7800);-webkit-text-stroke:0.2px currentColor;">-5.53%</div>
<div class="t" style="top:464px;left:428.50px;font-size:9.96px;line-height:9.96px;color:#3a3a3a;letter-spacing:0.40px;transform:scaleX(0.7800);-webkit-text-stroke:0.2px currentColor;">45.85%</div>
<div class="t" style="top:464px;left:563.10px;font-size:9.96px;line-height:9.96px;color:#3a3a3a;letter-spacing:0.40px;transform:scaleX(0.7800);-webkit-text-stroke:0.2px currentColor;">15.77%</div>
<div class="t" style="top:464px;left:699.11px;font-size:9.96px;line-height:9.96px;color:#3a3a3a;letter-spacing:0.40px;transform:scaleX(0.7800);-webkit-text-stroke:0.2px currentColor;">68.73B</div>
<div class="t" style="top:464px;left:838.69px;font-size:9.96px;line-height:9.96px;color:#3a3a3a;letter-spacing:0.40px;transform:scaleX(0.7800);-webkit-text-stroke:0.2px currentColor;">35.56</div>
<div class="t" style="top:464px;left:966.10px;font-size:9.96px;line-height:9.96px;color:#3a3a3a;letter-spacing:0.40px;transform:scaleX(0.7800);-webkit-text-stroke:0.2px currentColor;">18.52%</div>
<div class="r" style="left:49.40px;top:479.00px;width:951.60px;height:1.00px;background:#ececec;"></div>
<div class="t" style="top:486px;left:49.50px;font-size:9.96px;line-height:9.96px;color:#3a3a3a;letter-spacing:0.40px;transform:scaleX(0.7600);-webkit-text-stroke:0.2px currentColor;">NXTG</div>
<div class="r" style="left:49.50px;top:494.70px;width:22.45px;height:0.80px;background:#d6d6d6;"></div>
<div class="t" style="top:486px;left:283.10px;font-size:9.96px;line-height:9.96px;color:#3a3a3a;letter-spacing:0.40px;transform:scaleX(0.7800);-webkit-text-stroke:0.2px currentColor;">35.23%</div>
<div class="t" style="top:486px;left:428.50px;font-size:9.96px;line-height:9.96px;color:#3a3a3a;letter-spacing:0.40px;transform:scaleX(0.7800);-webkit-text-stroke:0.2px currentColor;">61.77%</div>
<div class="t" style="top:486px;left:563.10px;font-size:9.96px;line-height:9.96px;color:#3a3a3a;letter-spacing:0.40px;transform:scaleX(0.7800);-webkit-text-stroke:0.2px currentColor;">15.87%</div>
<div class="t" style="top:486px;left:694.49px;font-size:9.96px;line-height:9.96px;color:#3a3a3a;letter-spacing:0.40px;transform:scaleX(0.7800);-webkit-text-stroke:0.2px currentColor;">222.94B</div>
<div class="t" style="top:486px;left:839.27px;font-size:9.96px;line-height:9.96px;color:#3a3a3a;letter-spacing:0.40px;transform:scaleX(0.7800);-webkit-text-stroke:0.2px currentColor;">30.11</div>
<div class="t" style="top:486px;left:966.10px;font-size:9.96px;line-height:9.96px;color:#3a3a3a;letter-spacing:0.40px;transform:scaleX(0.7800);-webkit-text-stroke:0.2px currentColor;">16.54%</div>
<svg class="r" style="left:585px;top:379.60px" width="8" height="6" viewBox="0 0 8 6"><path d="M1.4 4.0 H5.8 L3.6 1.2 Z" fill="#555"/></svg>
<div class="r" style="left:35.00px;top:516.20px;width:989.00px;height:3.70px;background:#cbcbcb;"></div>
<div class="r" style="left:35.00px;top:519.90px;width:1.00px;height:175.10px;background:#dcdcdc;"></div>
<div class="t" style="top:526px;left:49.80px;font-size:10.03px;line-height:10.03px;color:#222;font-weight:bold;letter-spacing:0.30px;transform:scaleX(0.7737);-webkit-text-stroke:0.05px currentColor;">Thematic Talking Points</div>
<svg class="r" style="left:994.60px;top:524.40px" width="12" height="12" viewBox="0 0 12 12">
<path d="M6 3 V9 M3 6 H9" stroke="#333" stroke-width="0.8"/>
<path d="M6 1.8 L4.4 3.8 H7.6 Z M6 10.2 L4.4 8.2 H7.6 Z M1.8 6 L3.8 4.4 V7.6 Z M10.2 6 L8.2 4.4 V7.6 Z" fill="#222"/></svg>
<svg class="r" style="left:1011.60px;top:524.30px" width="6" height="12" viewBox="0 0 6 12">
<circle cx="3" cy="2.6" r="1.25" fill="#111"/><circle cx="3" cy="6" r="1.25" fill="#111"/><circle cx="3" cy="9.4" r="1.25" fill="#111"/></svg>
<div class="r" style="left:36.00px;top:540.50px;width:988.00px;height:1.00px;background:#e3e3e3;"></div>
<div class="r" style="left:49.40px;top:555.60px;width:965.40px;height:1.00px;background:#dddddd;"></div>
<div class="r" style="left:49.40px;top:555.60px;width:1.00px;height:140.00px;background:#dddddd;"></div>
<div class="r" style="left:1014.00px;top:555.60px;width:1.00px;height:140.00px;background:#dddddd;"></div>
<div class="r" style="left:49.40px;top:576.00px;width:965.40px;height:1.00px;background:#dddddd;"></div>
<svg class="r" style="left:55px;top:556px" width="140" height="20" viewBox="55 556 140 20">
<g stroke="#666" fill="none" stroke-width="1.4">
<circle cx="63.7" cy="564.1" r="2.5" stroke-width="1.3"/>
<circle cx="67.5" cy="567.7" r="2.5" stroke-width="1.3"/>
<rect x="80.7" y="562.3" width="8.6" height="7.0" rx="0.8" stroke-width="1.4"/>
<path d="M102.8 562.2 H109.3 M102.8 565.6 H109.3 M102.8 569.0 H109.3" stroke-width="1.3"/>
<path d="M119.2 562.2 h1.2 M119.2 565.6 h1.2 M119.2 569.0 h1.2" stroke-width="1.3"/>
<path d="M122.0 562.2 H128.6 M122.0 565.6 H128.6 M122.0 569.0 H128.6" stroke-width="1.3"/>
<path d="M140.4 561.5 H143.8 Q146.2 561.5 146.2 563.4 Q146.2 565.4 143.8 565.4 H140.4 M140.4 565.4 H144.2 Q146.7 565.4 146.7 567.6 Q146.7 569.8 144.0 569.8 H140.4 V561.5" stroke-width="1.6"/>
<path d="M161.0 561.7 H166.6 M159.8 569.8 H165.2 M164.0 561.7 L162.4 569.8" stroke-width="1.5"/>
<path d="M179.2 561.0 V566.6 Q179.2 569.0 182.3 569.0 Q185.4 569.0 185.4 566.6 V561.0" stroke-width="1.5"/>
<path d="M178.2 570.9 H186.5" stroke-width="1.2"/>
</g>
<g fill="#666" font-family="Liberation Sans" font-size="3.2" font-weight="bold">
<text x="99.6" y="563.4">1</text><text x="99.6" y="566.8">2</text><text x="99.6" y="570.2">3</text>
</g>
<circle cx="82.7" cy="564.4" r="0.6" fill="#666"/><path d="M82.2 568.5 L84.2 566.7 L85.2 567.3 L86.7 565.2 L87.8 566.2 V568.5 Z" fill="#555"/>
</svg>
<div class="r" style="left:1000.80px;top:577.00px;width:13.20px;height:118.00px;background:#fafafa;"></div>
<div class="r" style="left:1000.80px;top:577.00px;width:0.80px;height:118.00px;background:#f1f1f1;"></div>
<svg class="r" style="left:1002px;top:579px" width="12" height="10" viewBox="0 0 12 10"><path d="M1.0 7.4 L5.3 1.6 L9.6 7.4 Z" fill="#8f8f8f" stroke="#8f8f8f" stroke-width="0.6" stroke-linejoin="round"/></svg>
<div class="r" style="left:1003.60px;top:592.60px;width:7.40px;height:110.00px;background:#8e8e8e;border-radius:4px;"></div>
<div class="t" style="top:587px;left:60.50px;font-size:10.47px;line-height:10.47px;color:#222;font-weight:bold;letter-spacing:0.25px;transform:scaleX(0.6881);">Energy Infrastructure &amp; Electrification Demand</div>
<div class="r" style="left:60.50px;top:595.90px;width:168.30px;height:0.90px;background:#555;"></div>
<div class="t" style="top:600px;left:60.50px;font-size:10.47px;line-height:10.47px;color:#222;font-weight:bold;letter-spacing:0.25px;transform:scaleX(0.6918);">How to frame the conversation</div>
<div class="r" style="left:82.5px;top:616.10px;width:2.2px;height:2.2px;border-radius:1.1px;background:#444"></div>
<div class="t" style="top:613px;left:87.80px;font-size:10.47px;line-height:10.47px;color:#333;letter-spacing:0.25px;transform:scaleX(0.7342);-webkit-text-stroke:0.12px currentColor;">Position this theme around <i>power demand growth.</i></div>
<div class="r" style="left:82.5px;top:628.85px;width:2.2px;height:2.2px;border-radius:1.1px;background:#444"></div>
<div class="t" style="top:625px;left:87.80px;font-size:10.47px;line-height:10.47px;color:#333;letter-spacing:0.25px;transform:scaleX(0.7388);-webkit-text-stroke:0.12px currentColor;">Tie allocation to AI data-center electricity consumption and grid modernization.</div>
<div class="r" style="left:82.5px;top:641.60px;width:2.2px;height:2.2px;border-radius:1.1px;background:#444"></div>
<div class="t" style="top:638px;left:87.80px;font-size:10.47px;line-height:10.47px;color:#333;letter-spacing:0.25px;transform:scaleX(0.7412);-webkit-text-stroke:0.12px currentColor;">Committees are deciding whether portfolios need infrastructure stability or commodity sensitivity.</div>
<div class="t" style="top:651px;left:60.50px;font-size:10.47px;line-height:10.47px;color:#222;font-weight:bold;letter-spacing:0.25px;transform:scaleX(0.6872);">What to highlight</div>
<div class="r" style="left:82.5px;top:667.10px;width:2.2px;height:2.2px;border-radius:1.1px;background:#444"></div>
<div class="t" style="top:664px;left:87.80px;font-size:10.47px;line-height:10.47px;color:#333;letter-spacing:0.25px;transform:scaleX(0.7243);-webkit-text-stroke:0.12px currentColor;">Compare utility-heavy vs energy-sensitive exposure profiles</div>
<div class="r" style="left:82.5px;top:679.85px;width:2.2px;height:2.2px;border-radius:1.1px;background:#444"></div>
<div class="t" style="top:676px;left:87.80px;font-size:10.47px;line-height:10.47px;color:#333;letter-spacing:0.25px;transform:scaleX(0.7369);-webkit-text-stroke:0.12px currentColor;">Show concentration differences in top holdings</div>
<div class="r" style="left:82.5px;top:692.60px;width:2.2px;height:2.2px;border-radius:1.1px;background:#444"></div>
<div class="t" style="top:689px;left:87.80px;font-size:10.47px;line-height:10.47px;color:#333;letter-spacing:0.25px;transform:scaleX(0.7251);-webkit-text-stroke:0.12px currentColor;">Use this to ask: <i>“Are you trying to hedge power demand or express a cyclical energy view?”</i></div>
</body></html>
